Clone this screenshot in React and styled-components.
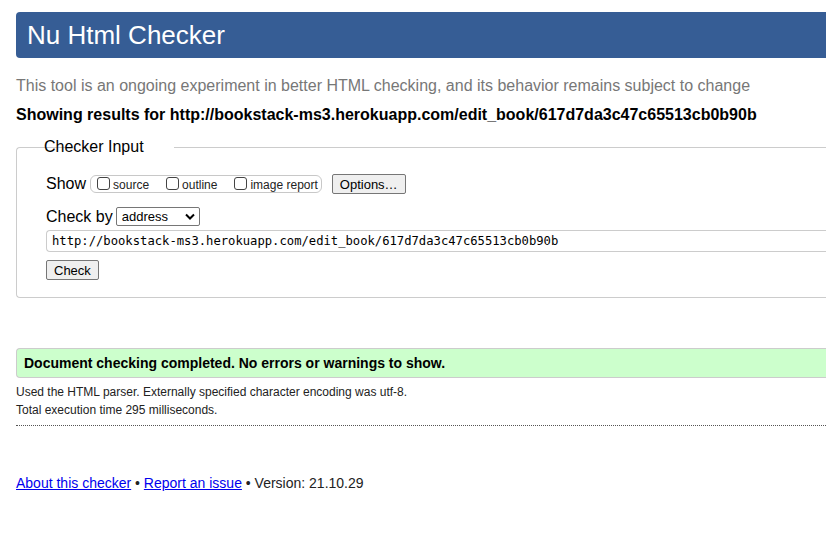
import React from "react";
import styled, { createGlobalStyle } from "styled-components";

const Global = createGlobalStyle`
  html, body {
    margin: 0;
    padding: 0;
    background: #fff;
    overflow: hidden;
  }
  body {
    font-family: "Liberation Sans", Arial, sans-serif;
    color: #000;
  }
`;

const Page = styled.div`
  width: 1000px;
  padding: 12px 0 0 16px;
`;

const Header = styled.h1`
  margin: 0;
  height: 46px;
  display: flex;
  align-items: center;
  padding-left: 11px;
  background: #365d95;
  color: #fff;
  font-size: 26px;
  font-weight: normal;
  border-radius: 4px 0 0 4px;
`;

const Intro = styled.p`
  margin: 18px 0 0;
  color: #777;
  font-size: 16px;
  line-height: 20px;
`;

const Results = styled.p`
  margin: 9px 0 0;
  font-size: 16px;
  font-weight: bold;
  line-height: 20px;
`;

const Fieldset = styled.fieldset`
  margin: 13px 0 0;
  padding: 14px 0 17px 29px;
  border: 1px solid #ccc;
  border-right: none;
  border-radius: 4px 0 0 4px;
`;

const Legend = styled.legend`
  font-size: 16px;
  padding: 0 1px;
  margin-left: 26px;
  position: relative;
  left: -29px;
`;

const Row = styled.div`
  display: flex;
  align-items: center;
  margin-top: ${(p) => p.$top || 0}px;
`;

const Label = styled.span`
  font-size: 16px;
  margin-right: ${(p) => p.$gap || 3}px;
`;

const ShowGroup = styled.div`
  display: flex;
  align-items: center;
  gap: 17px;
  height: 16px;
  padding: 0 3px 0 6px;
  border: 1px solid #c8c8c8;
  border-radius: 6px;
  margin-right: 10px;
`;

const Check = styled.label`
  display: flex;
  align-items: center;
  font-size: 12px;
  color: #222;
  gap: 3px;
  padding-top: 2px;
`;

const Box = styled.span`
  width: 11px;
  height: 11px;
  border: 1px solid #444;
  border-radius: 3px;
  background: #fff;
  margin-top: -4px;
`;

const Button = styled.button`
  font-family: "Liberation Sans", Arial, sans-serif;
  font-size: 13px;
  color: #000;
  background: #efefef;
  border: 1px solid #767676;
  border-radius: 2px;
  height: 20px;
  padding: 0 7px;
`;

const Select = styled.div`
  display: flex;
  align-items: center;
  justify-content: space-between;
  width: 73px;
  height: 17px;
  padding: 0 4px 0 5px;
  border: 1px solid #767676;
  border-radius: 2px;
  font-size: 13px;
`;

const UrlInput = styled.div`
  margin-top: 4px;
  height: 20px;
  display: flex;
  align-items: center;
  padding-left: 5px;
  border: 1px solid #ccc;
  border-right: none;
  border-radius: 4px 0 0 4px;
  font-family: "DejaVu Sans Mono", monospace;
  font-size: 12.2px;
  color: #000;
`;

const Success = styled.div`
  margin-top: 50px;
  height: 28px;
  display: flex;
  align-items: center;
  padding-left: 7px;
  background: #ccffcc;
  border: 1px solid #ccc;
  border-right: none;
  border-radius: 4px 0 0 4px;
  font-size: 14px;
  font-weight: bold;
`;

const Detail = styled.p`
  margin: ${(p) => p.$top || 0}px 0 0;
  font-size: 12px;
  line-height: 18px;
  color: #222;
`;

const Rule = styled.hr`
  margin: 6px 0 0;
  border: none;
  border-top: 1px dotted #555;
  width: 810px;
`;

const Footer = styled.p`
  margin: 49px 0 0;
  font-size: 14px;
  color: #222;
  a {
    color: #0000ee;
    text-decoration: underline;
  }
`;

const Chevron = () => (
  <svg width="10" height="7" viewBox="0 0 10 7">
    <path d="M1 1.5 L5 5.5 L9 1.5" fill="none" stroke="#000" strokeWidth="2" />
  </svg>
);

const options = ["source", "outline", "image report"];

const App = () => (
  <Page>
    <Global />
    <Header>Nu Html Checker</Header>
    <Intro>
      This tool is an ongoing experiment in better HTML checking, and its behavior remains subject to change
    </Intro>
    <Results>
      Showing results for http://bookstack-ms3.herokuapp.com/edit_book/617d7da3c47c65513cb0b90b
    </Results>
    <Fieldset>
      <Legend>Checker Input</Legend>
      <Row $top={4}>
        <Label $gap={4}>Show</Label>
        <ShowGroup>
          {options.map((o) => (
            <Check key={o}>
              <Box />
              {o}
            </Check>
          ))}
        </ShowGroup>
        <Button>Options…</Button>
      </Row>
      <Row $top={13}>
        <Label>Check by</Label>
        <Select>
          address
          <Chevron />
        </Select>
      </Row>
      <UrlInput>http://bookstack-ms3.herokuapp.com/edit_book/617d7da3c47c65513cb0b90b</UrlInput>
      <Row $top={8}>
        <Button>Check</Button>
      </Row>
    </Fieldset>
    <Success>Document checking completed. No errors or warnings to show.</Success>
    <Detail $top={5}>Used the HTML parser. Externally specified character encoding was utf-8.</Detail>
    <Detail>Total execution time 295 milliseconds.</Detail>
    <Rule />
    <Footer>
      <a href="#about">About this checker</a> • <a href="#issue">Report an issue</a> • Version: 21.10.29
    </Footer>
  </Page>
);

export default App;
